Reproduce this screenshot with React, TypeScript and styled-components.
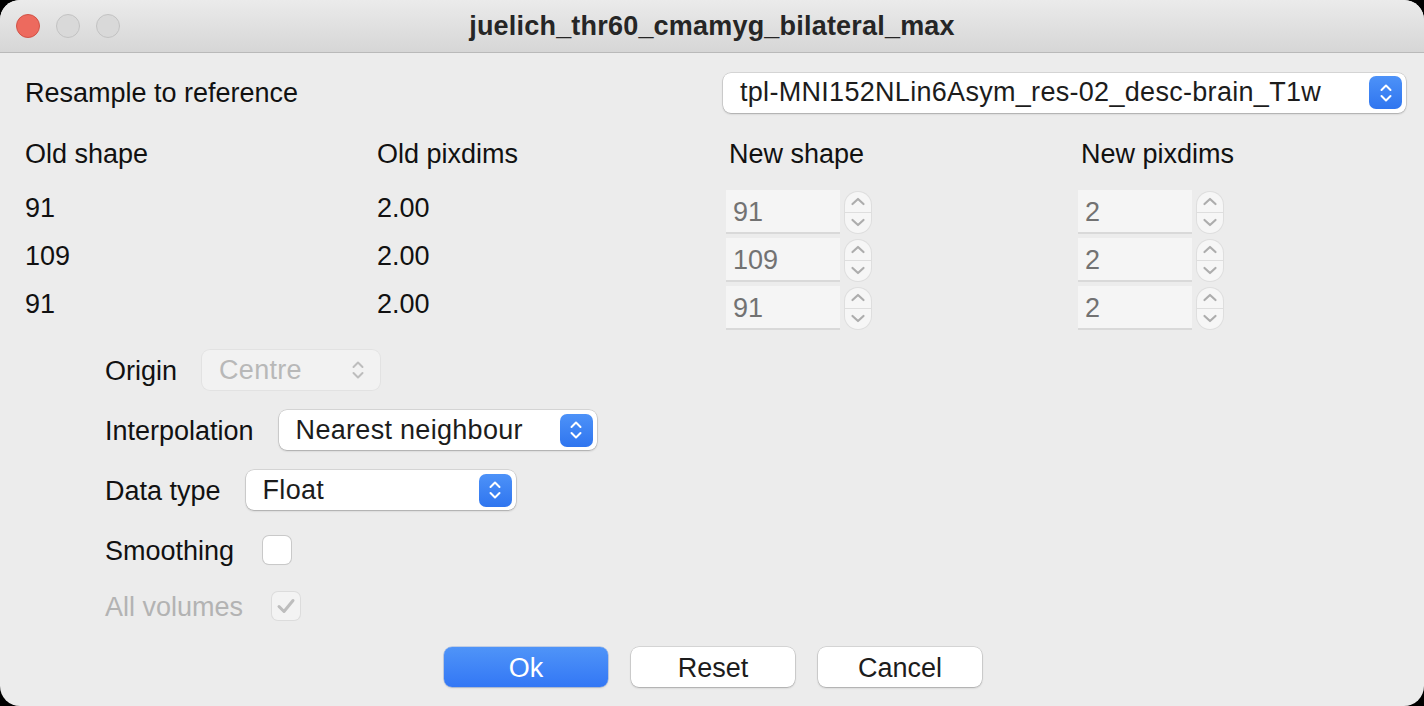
import React from "react";
import styled, { createGlobalStyle, css } from "styled-components";

const Global = createGlobalStyle`
  html, body { margin: 0; padding: 0; background: #000; }
  body { font-family: "Liberation Sans", Arial, sans-serif; }
  * { box-sizing: border-box; }
`;

const Window = styled.div`
  width: 1424px;
  height: 706px;
  border-radius: 20px;
  overflow: hidden;
  background: #ececec;
  display: flex;
  flex-direction: column;
  font-family: "Liberation Sans", Arial, sans-serif;
  font-size: 27px;
  color: #111;
`;

const TitleBar = styled.div`
  position: relative;
  height: 53px;
  flex: none;
  background: linear-gradient(#ebebeb, #d6d6d6);
  border-bottom: 1px solid #b9b9b9;
  display: flex;
  align-items: center;
  justify-content: center;
`;

const Lights = styled.div`
  position: absolute;
  left: 16px;
  top: 14px;
  display: flex;
  gap: 16px;
`;

const Light = styled.span<{ $red?: boolean }>`
  width: 24px;
  height: 24px;
  border-radius: 50%;
  background: ${(p) => (p.$red ? "#ed6a5e" : "#d9d9d9")};
  border: 1px solid ${(p) => (p.$red ? "#d05347" : "#c2c2c2")};
`;

const Title = styled.div`
  font-weight: bold;
  font-size: 27px;
  color: #262626;
  letter-spacing: 0.2px;
  padding-top: 1px;
`;

const Content = styled.div`
  flex: 1;
  padding: 19px 18px 0 25px;
  display: flex;
  flex-direction: column;
`;

const TopRow = styled.div`
  display: flex;
  align-items: center;
  justify-content: space-between;
  height: 41px;
`;

const Label = styled.span<{ $disabled?: boolean }>`
  color: ${(p) => (p.$disabled ? "#b3b3b3" : "#111")};
  white-space: nowrap;
  padding-top: 2px;
`;

const Combo = styled.div<{ $width: number; $disabled?: boolean }>`
  width: ${(p) => p.$width}px;
  height: 40px;
  border-radius: 8px;
  background: ${(p) => (p.$disabled ? "#f2f2f2" : "#fff")};
  box-shadow: ${(p) =>
    p.$disabled
      ? "0 0 0 1px rgba(0,0,0,0.04)"
      : "0 0 0 0.5px rgba(0,0,0,0.18), 0 1px 2px rgba(0,0,0,0.22)"};
  display: flex;
  align-items: center;
  justify-content: space-between;
  padding: 0 4px 0 17px;
  color: ${(p) => (p.$disabled ? "#b8b8b8" : "#1c1c1c")};
  letter-spacing: 0.3px;
  white-space: nowrap;
  flex: none;
`;

const BlueStep = styled.div`
  width: 33px;
  height: 33px;
  border-radius: 7px;
  background: linear-gradient(#4d92f8, #2f75ef);
  display: flex;
  align-items: center;
  justify-content: center;
`;

const GrayStep = styled.div`
  width: 20px;
  height: 33px;
  margin-right: 8px;
  display: flex;
  align-items: center;
  justify-content: center;
`;

const Chevrons = ({ color }: { color: string }) => (
  <svg width="14" height="24" viewBox="0 0 14 24" fill="none">
    <path d="M2.5 9 L7 4.5 L11.5 9" stroke={color} strokeWidth="2" strokeLinecap="round" strokeLinejoin="round" />
    <path d="M2.5 15 L7 19.5 L11.5 15" stroke={color} strokeWidth="2" strokeLinecap="round" strokeLinejoin="round" />
  </svg>
);

const Grid = styled.div`
  display: grid;
  grid-template-columns: repeat(3, 352px) auto;
  margin-top: 16px;
`;

const Column = styled.div`
  display: flex;
  flex-direction: column;
`;

const Header = styled.div`
  height: 48px;
  line-height: 48px;
  padding-top: 1px;
`;

const ValueList = styled.div<{ $boxes?: boolean }>`
  display: flex;
  flex-direction: column;
  gap: ${(p) => (p.$boxes ? "4px" : "0")};
  margin-top: ${(p) => (p.$boxes ? "13px" : "6px")};
  ${(p) => (p.$boxes ? css`margin-left: -3px;` : "")}
`;

const Value = styled.div`
  height: 48px;
  line-height: 48px;
  padding-top: 1px;
`;

const SpinRow = styled.div`
  display: flex;
  align-items: center;
  gap: 5px;
  height: 44px;
`;

const SpinField = styled.div`
  width: 114px;
  height: 44px;
  background: #f5f5f5;
  border-bottom: 2px solid #d9d9d9;
  color: #727272;
  padding-left: 7px;
  padding-top: 3px;
  display: flex;
  align-items: center;
`;

const SpinButtons = styled.div`
  width: 26px;
  height: 41px;
  border-radius: 13px;
  background: #f6f6f6;
  box-shadow: 0 0 0 1px #dedede;
  display: flex;
  flex-direction: column;
  overflow: hidden;
`;

const SpinHalf = styled.div<{ $top?: boolean }>`
  flex: 1;
  display: flex;
  align-items: center;
  justify-content: center;
  ${(p) => (p.$top ? css`border-bottom: 1px solid #dedede;` : "")}
`;

const Chev = ({ up }: { up?: boolean }) => (
  <svg width="16" height="11" viewBox="0 0 16 11" fill="none">
    <path
      d={up ? "M2.5 8 L8 3 L13.5 8" : "M2.5 3 L8 8 L13.5 3"}
      stroke="#adadad"
      strokeWidth="2.2"
      strokeLinecap="round"
      strokeLinejoin="round"
    />
  </svg>
);

const Spin = ({ value }: { value: string }) => (
  <SpinRow>
    <SpinField>{value}</SpinField>
    <SpinButtons>
      <SpinHalf $top>
        <Chev up />
      </SpinHalf>
      <SpinHalf>
        <Chev />
      </SpinHalf>
    </SpinButtons>
  </SpinRow>
);

const Form = styled.div`
  display: flex;
  flex-direction: column;
  padding-left: 80px;
  margin-top: 20px;
`;

const FormRow = styled.div<{ $h: number; $top?: number }>`
  display: flex;
  align-items: center;
  gap: 25px;
  height: ${(p) => p.$h}px;
  margin-top: ${(p) => p.$top ?? 0}px;
`;

const Checkbox = styled.div<{ $disabled?: boolean }>`
  width: 28px;
  height: 28px;
  margin-left: 4px;
  border-radius: 6px;
  background: ${(p) => (p.$disabled ? "#f3f3f3" : "#fff")};
  box-shadow: ${(p) =>
    p.$disabled ? "0 0 0 1px #dcdcdc" : "0 0 0 1px #c9c9c9, 0 1px 1px rgba(0,0,0,0.08)"};
  display: flex;
  align-items: center;
  justify-content: center;
`;

const Buttons = styled.div`
  display: flex;
  justify-content: center;
  gap: 23px;
  margin-top: 21px;
  margin-left: -5px;
`;

const Button = styled.div<{ $primary?: boolean }>`
  width: 164px;
  height: 40px;
  border-radius: 8px;
  display: flex;
  align-items: center;
  justify-content: center;
  padding-top: 2px;
  ${(p) =>
    p.$primary
      ? css`
          background: linear-gradient(#4f94f8, #3377f5);
          color: #fff;
          box-shadow: 0 0 0 0.5px rgba(30, 90, 200, 0.4), 0 1px 2px rgba(0, 0, 0, 0.15);
        `
      : css`
          background: #fff;
          color: #1c1c1c;
          box-shadow: 0 0 0 0.5px rgba(0, 0, 0, 0.18), 0 1px 2px rgba(0, 0, 0, 0.22);
        `}
`;

export default function App() {
  return (
    <>
      <Global />
      <Window>
        <TitleBar>
          <Lights>
            <Light $red />
            <Light />
            <Light />
          </Lights>
          <Title>juelich_thr60_cmamyg_bilateral_max</Title>
        </TitleBar>
        <Content>
          <TopRow>
            <Label>Resample to reference</Label>
            <Combo $width={683}>
              <span>tpl-MNI152NLin6Asym_res-02_desc-brain_T1w</span>
              <BlueStep>
                <Chevrons color="#fff" />
              </BlueStep>
            </Combo>
          </TopRow>
          <Grid>
            <Column>
              <Header>Old shape</Header>
              <ValueList>
                <Value>91</Value>
                <Value>109</Value>
                <Value>91</Value>
              </ValueList>
            </Column>
            <Column>
              <Header>Old pixdims</Header>
              <ValueList>
                <Value>2.00</Value>
                <Value>2.00</Value>
                <Value>2.00</Value>
              </ValueList>
            </Column>
            <Column>
              <Header>New shape</Header>
              <ValueList $boxes>
                <Spin value="91" />
                <Spin value="109" />
                <Spin value="91" />
              </ValueList>
            </Column>
            <Column>
              <Header>New pixdims</Header>
              <ValueList $boxes>
                <Spin value="2" />
                <Spin value="2" />
                <Spin value="2" />
              </ValueList>
            </Column>
          </Grid>
          <Form>
            <FormRow $h={40}>
              <Label>Origin</Label>
              <Combo $width={178} $disabled>
                <span>Centre</span>
                <GrayStep>
                  <Chevrons color="#bdbdbd" />
                </GrayStep>
              </Combo>
            </FormRow>
            <FormRow $h={40} $top={20}>
              <Label>Interpolation</Label>
              <Combo $width={318}>
                <span>Nearest neighbour</span>
                <BlueStep>
                  <Chevrons color="#fff" />
                </BlueStep>
              </Combo>
            </FormRow>
            <FormRow $h={40} $top={20}>
              <Label>Data type</Label>
              <Combo $width={270}>
                <span>Float</span>
                <BlueStep>
                  <Chevrons color="#fff" />
                </BlueStep>
              </Combo>
            </FormRow>
            <FormRow $h={40} $top={20}>
              <Label>Smoothing</Label>
              <Checkbox />
            </FormRow>
            <FormRow $h={40} $top={16}>
              <Label $disabled>All volumes</Label>
              <Checkbox $disabled>
                <svg width="20" height="18" viewBox="0 0 20 18" fill="none">
                  <path d="M3 9.5 L8 14.5 L17 3.5" stroke="#bdbdbd" strokeWidth="3" strokeLinecap="round" strokeLinejoin="round" />
                </svg>
              </Checkbox>
            </FormRow>
          </Form>
          <Buttons>
            <Button $primary>Ok</Button>
            <Button>Reset</Button>
            <Button>Cancel</Button>
          </Buttons>
        </Content>
      </Window>
    </>
  );
}
